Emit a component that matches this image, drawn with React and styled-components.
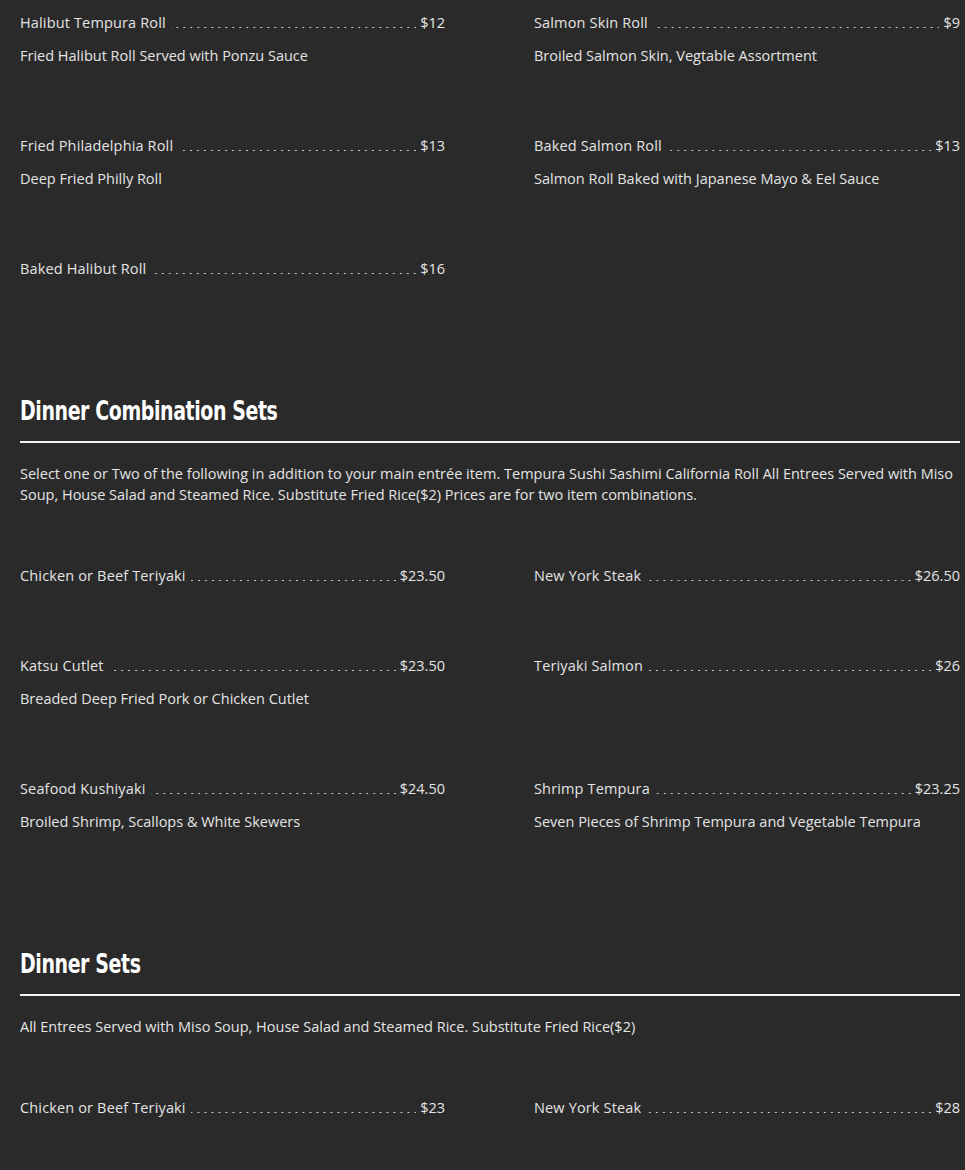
import React from "react";
import styled, { createGlobalStyle } from "styled-components";

const GlobalStyle = createGlobalStyle`
  html, body {
    margin: 0;
    padding: 0;
    background: #2a2a2a;
  }
  body {
    font-family: "Open Sans", "Liberation Sans", sans-serif;
    color: #e4e4e4;
  }
`;

const Page = styled.div`
  padding: 12px 5px 40px 20px;
`;

const Grid = styled.div`
  display: grid;
  grid-template-columns: 425px 426px;
  column-gap: 89px;
`;

const Item = styled.div`
  padding-bottom: 68px;
`;

const NameRow = styled.div`
  display: flex;
  align-items: baseline;
  font-size: 14.5px;
  line-height: 22px;
`;

const Name = styled.span`
  white-space: nowrap;
  letter-spacing: 0.15px;
`;

const Leader = styled.span`
  flex: 1;
  height: 1px;
  margin: 0 4px 6px 5px;
  background-image: linear-gradient(to right, transparent 5px, #c4c4c4 5px);
  background-size: 7px 1px;
  background-repeat: repeat-x;
  background-position: right center;
  align-self: flex-end;
`;

const Price = styled.span`
  white-space: nowrap;
`;

const Desc = styled.div`
  margin-top: 11px;
  font-size: 14.5px;
  line-height: 22px;
`;

const Section = styled.section`
  margin-top: 46px;
`;

const Heading = styled.h2`
  margin: 0;
  font-family: "DejaVu Sans Condensed", "DejaVu Sans", sans-serif;
  font-weight: 700;
  font-size: 27px;
  line-height: 34px;
  color: #ffffff;
  letter-spacing: -0.5px;
  transform: scaleX(0.78);
  transform-origin: left center;
  white-space: nowrap;
`;

const Rule = styled.hr`
  margin: 13px 0 0;
  border: none;
  height: 2px;
  background: #f2f2f2;
`;

const Intro = styled.p`
  margin: 20px 0 60px;
  font-size: 14.5px;
  line-height: 21px;
`;

const MenuItem = ({ name, price, desc }) => (
  <Item>
    <NameRow>
      <Name>{name}</Name>
      <Leader />
      <Price>{price}</Price>
    </NameRow>
    {desc && <Desc>{desc}</Desc>}
  </Item>
);

const rolls = [
  { name: "Halibut Tempura Roll", price: "$12", desc: "Fried Halibut Roll Served with Ponzu Sauce" },
  { name: "Salmon Skin Roll", price: "$9", desc: "Broiled Salmon Skin, Vegtable Assortment" },
  { name: "Fried Philadelphia Roll", price: "$13", desc: "Deep Fried Philly Roll" },
  { name: "Baked Salmon Roll", price: "$13", desc: "Salmon Roll Baked with Japanese Mayo & Eel Sauce" },
  { name: "Baked Halibut Roll", price: "$16" },
];

const combos = [
  { name: "Chicken or Beef Teriyaki", price: "$23.50" },
  { name: "New York Steak", price: "$26.50" },
  { name: "Katsu Cutlet", price: "$23.50", desc: "Breaded Deep Fried Pork or Chicken Cutlet" },
  { name: "Teriyaki Salmon", price: "$26" },
  { name: "Seafood Kushiyaki", price: "$24.50", desc: "Broiled Shrimp, Scallops & White Skewers" },
  { name: "Shrimp Tempura", price: "$23.25", desc: "Seven Pieces of Shrimp Tempura and Vegetable Tempura" },
];

const dinners = [
  { name: "Chicken or Beef Teriyaki", price: "$23" },
  { name: "New York Steak", price: "$28" },
];

const App = () => (
  <>
    <GlobalStyle />
    <Page>
      <Grid>
        {rolls.map((r) => (
          <MenuItem key={r.name} {...r} />
        ))}
      </Grid>

      <Section>
        <Heading>Dinner Combination Sets</Heading>
        <Rule />
        <Intro>
          Select one or Two of the following in addition to your main entrée item. Tempura Sushi Sashimi
          California Roll All Entrees Served with Miso Soup, House Salad and Steamed Rice. Substitute Fried
          Rice($2) Prices are for two item combinations.
        </Intro>
        <Grid>
          {combos.map((r) => (
            <MenuItem key={r.name} {...r} />
          ))}
        </Grid>
      </Section>

      <Section>
        <Heading>Dinner Sets</Heading>
        <Rule />
        <Intro>
          All Entrees Served with Miso Soup, House Salad and Steamed Rice. Substitute Fried Rice($2)
        </Intro>
        <Grid>
          {dinners.map((r) => (
            <MenuItem key={r.name} {...r} />
          ))}
        </Grid>
      </Section>
    </Page>
  </>
);

export default App;
